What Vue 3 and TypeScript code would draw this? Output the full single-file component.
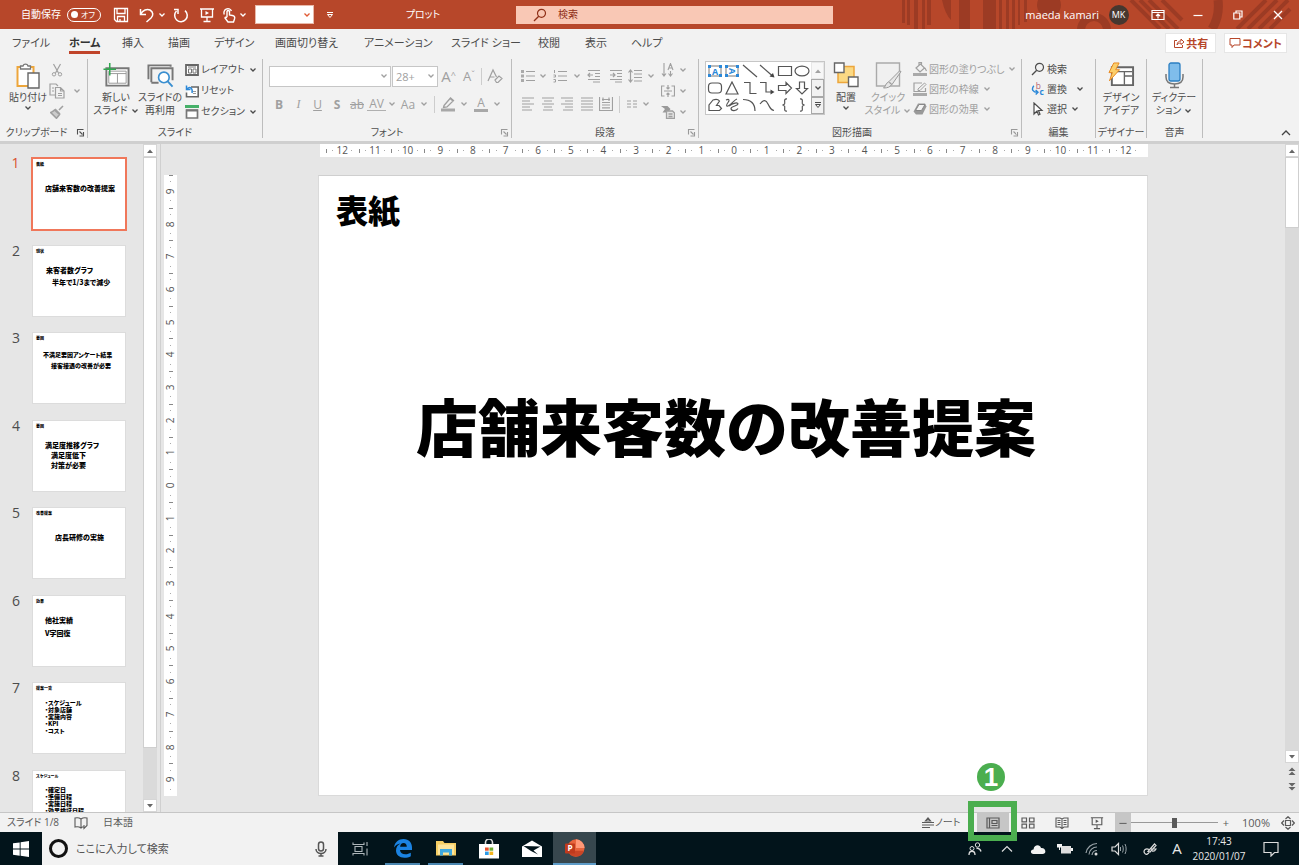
<script setup lang="ts">
interface ThumbLine {
  text: string
  indent?: number
}
interface Thumb {
  title: string
  top: number
  left: number
  size: number
  leading: number
  lines: ThumbLine[]
}

const tabs: string[] = ['ファイル', 'ホーム', '挿入', '描画', 'デザイン', '画面切り替え', 'アニメーション', 'スライド ショー', '校閲', '表示', 'ヘルプ']

const shapes: string[] = [
  'textbox', 'vtextbox', 'line', 'linearrow', 'rect', 'ellipse',
  'round', 'triangle', 'elbow', 'elbowarrow', 'rightarrow', 'downarrow',
  'freeform', 'scribble', 'arc', 'curve', 'lbrace', 'rbrace',
]

const drawRows = [
  { icon: 'fill', label: '図形の塗りつぶし' },
  { icon: 'outline', label: '図形の枠線' },
  { icon: 'effect', label: '図形の効果' },
]

const thumbs: Thumb[] = [
  { title: '表紙', top: 15, left: 9, size: 7, leading: 12, lines: [{ text: '店舗来客数の改善提案' }] },
  { title: '現状', top: 10, left: 10, size: 7, leading: 12, lines: [{ text: '来客者数グラフ' }, { text: '半年で1/3まで減少', indent: 6 }] },
  { title: '要因', top: 8, left: 7, size: 6, leading: 11, lines: [{ text: '不満足要因アンケート結果' }, { text: '接客接遇の改善が必要', indent: 8 }] },
  { title: '要因', top: 11, left: 9, size: 7, leading: 10, lines: [{ text: '満足度推移グラフ' }, { text: '満足度低下', indent: 6 }, { text: '対策が必要', indent: 6 }] },
  { title: '改善提案', top: 15, left: 19, size: 7, leading: 12, lines: [{ text: '店長研修の実施' }] },
  { title: '効果', top: 10, left: 9, size: 7, leading: 13, lines: [{ text: '他社実績' }, { text: 'V字回復' }] },
  { title: '提案一覧', top: 8, left: 9, size: 6, leading: 7, lines: [{ text: '・スケジュール' }, { text: '・対象店舗' }, { text: '・実施内容' }, { text: '・KPI' }, { text: '・コスト' }] },
  { title: 'スケジュール', top: 7, left: 9, size: 6, leading: 7, lines: [{ text: '・確定日' }, { text: '・準備日程' }, { text: '・実施日程' }, { text: '・効果検証日程' }] },
]

const span = (n: number): number[] => Array.from({ length: 2 * n + 1 }, (_, i) => Math.abs(i - n))
const horizontal = span(12)
const vertical = span(9)
</script>

<template>
  <div class="app">
    <svg class="sprite" aria-hidden="true">
      <symbol id="chev" viewBox="0 0 8 8"><path d="M1.500 2.500 4 5l2.500-2.500" fill="none" stroke="currentColor" stroke-width="1.300" /></symbol>
      <symbol id="save" viewBox="0 0 16 16"><path d="M1.500 1.500h13v13h-11l-2-2zM4 1.500v5h8v-5M4.500 14.500v-5h7v5M7 12v2" fill="none" stroke="currentColor" stroke-width="1.300" /></symbol>
      <symbol id="undo" viewBox="0 0 16 16"><path d="M1.500 2v5.500H7M1.500 7.500C4 3 8 1.500 11 3c3.500 2 3.500 5.500 1 8l-4.500 4" fill="none" stroke="currentColor" stroke-width="1.500" /></symbol>
      <symbol id="redo" viewBox="0 0 16 16"><path d="M3.500 4A6.300 6.300 0 1 0 12 3.600M1 2.500h4V7" fill="none" stroke="currentColor" stroke-width="1.500" /></symbol>
      <symbol id="show" viewBox="0 0 16 16"><path d="M1 2h14M2.500 2v8h11V2M8 10v4M4.500 14.500h7" fill="none" stroke="currentColor" stroke-width="1.300" /><path d="M6.500 4v4l3.500-2z" fill="currentColor" /></symbol>
      <symbol id="touch" viewBox="0 0 16 16"><path d="M3.300 7.500A4 4 0 1 1 10.500 4M6 10V4.500a1.300 1.300 0 0 1 2.500 0V8l4 .800c1.500.500 1.500 1.500 1 3.200l-1 3H7L4 11c0-1 1-1.300 2-.200" fill="none" stroke="currentColor" stroke-width="1.400" /></symbol>
      <symbol id="customize" viewBox="0 0 8 8"><path d="M1 1.500h6M1.500 3.500h5L4 6.500z" fill="none" stroke="currentColor" stroke-width="1" /></symbol>
      <symbol id="lens" viewBox="0 0 14 14"><circle cx="8.500" cy="5.300" r="4" fill="none" stroke="currentColor" stroke-width="1.200" /><path d="M5.700 8.200 1 13" stroke="currentColor" stroke-width="1.300" /></symbol>
      <symbol id="ribbonmode" viewBox="0 0 14 12"><path d="M1 1.500h12v9H1zM1 3.500h12M7 9.500V5.500M5 7l2-2 2 2" fill="none" stroke="currentColor" stroke-width="1.200" /></symbol>
      <symbol id="min" viewBox="0 0 10 10"><path d="M.5 5.500h9" stroke="currentColor" stroke-width="1.200" /></symbol>
      <symbol id="restore" viewBox="0 0 10 10"><path d="M.8 3h6v6h-6zM3 3V1h6v6H7" fill="none" stroke="currentColor" stroke-width="1.200" /></symbol>
      <symbol id="close" viewBox="0 0 10 10"><path d="m1 1 8 8M9 1 1 9" stroke="currentColor" stroke-width="1.300" /></symbol>
      <symbol id="share" viewBox="0 0 12 12"><path d="M4 3.500H1.500v7h8V8M4 8c.3-3 2-4 4-4V2l3 3-3 2.500V6C6 6 5 6.500 4 8z" fill="none" stroke="currentColor" stroke-width="1" /></symbol>
      <symbol id="comment" viewBox="0 0 12 12"><path d="M1 1.500h10v6.500H5l-2 2.500V8H1z" fill="none" stroke="currentColor" stroke-width="1" /></symbol>
      <symbol id="launcher" viewBox="0 0 9 9"><path d="M1.500 6.500v-5h6M3.500 3.500l3 3M7.500 4v4h-4" fill="none" stroke="currentColor" stroke-width="1.100" /></symbol>

      <symbol id="paste" viewBox="0 0 26 27"><path d="M2 5h16v19H2z" fill="#fff" stroke="#eda63c" stroke-width="2" /><path d="M5 7V4h2.500a2.600 2.600 0 0 1 5 0H15v3z" fill="#fff" stroke="#777" stroke-width="1.300" /><path d="M12.500 11h11v15h-11z" fill="#fff" stroke="#666" stroke-width="1.400" /></symbol>
      <symbol id="cut" viewBox="0 0 14 14"><path d="m3.500 1 5 9M10.500 1l-5 9" stroke="currentColor" stroke-width="1.200" /><circle cx="4" cy="11.300" r="1.700" fill="none" stroke="currentColor" /><circle cx="10" cy="11.300" r="1.700" fill="none" stroke="currentColor" /></symbol>
      <symbol id="copy" viewBox="0 0 16 16"><path d="M6 12H1V1h6l2 2M6.500 4.500h5L15 8v7H6.500zM11.500 4.500V8H15M9 10.500h4M9 12.500h4M3 5h2M3 8h2" fill="none" stroke="currentColor" stroke-width="1.200" /></symbol>
      <symbol id="painter" viewBox="0 0 14 14"><path d="M13 1 9 5M5 4l5 5M4.500 5C3 6.500 1.500 7 .7 7.500l5.800 5.800c1-1 1.500-2 3-3.800z" fill="#ccc" stroke="currentColor" stroke-width="1.600" /></symbol>
      <symbol id="newslide" viewBox="0 0 28 26"><path d="M3.500 5.500h23v18h-23z" fill="#fff" stroke="#777" stroke-width="2" /><path d="M6 11h18M6 8.500h18V21H6zM15 11v10" fill="none" stroke="#999" /><path d="M7 0v13M.5 6.500h13" stroke="#2fa84f" stroke-width="1.600" /></symbol>
      <symbol id="reuse" viewBox="0 0 28 26"><path d="M1.500 17V2.500h23V4M4.500 20V5.500h22V18M4.500 20.500H12" fill="none" stroke="#777" stroke-width="2" /><circle cx="17.500" cy="15" r="5.500" fill="#fff" stroke="#3a8fd0" stroke-width="1.700" /><path d="m21.500 19 5 5.500" stroke="#3a8fd0" stroke-width="2" /></symbol>
      <symbol id="layout" viewBox="0 0 14 13"><path d="M1 1.500h12v10H1z" fill="#fff" stroke="#666" stroke-width="1.800" /><path d="M3.500 5.500h3v4h-3zM8 5.500h3v4H8zM3 3.500h8" fill="none" stroke="#777" /></symbol>
      <symbol id="reset" viewBox="0 0 14 13"><path d="M6 2.500h7.200v9.700H1.500V8" fill="#fff" stroke="#666" stroke-width="1.600" /><path d="M8 9h3M8 7h3" stroke="#999" /><path d="M1.500 1v4h4M2 4.500c3-3 6-1 5 4" fill="none" stroke="#2b88d8" stroke-width="1.500" /></symbol>
      <symbol id="section" viewBox="0 0 14 14"><path d="M0 0h14v3H0z" fill="#45b068" /><path d="M1.500 5h11v8h-11z" fill="#fff" stroke="#777" stroke-width="1.700" /><path d="M1 4.500h12v2H1z" fill="#777" /></symbol>

      <symbol id="clearfmt" viewBox="0 0 16 16"><path d="m1 13 5-11 3.500 7M3 9h4.500" fill="none" stroke="currentColor" stroke-width="1.200" /><path d="m8 12 4-4 3 2.500-4 4H9.500z" fill="none" stroke="currentColor" stroke-width="1.200" /></symbol>
      <symbol id="marker" viewBox="0 0 16 16"><path d="M4 9.500 10.500 2l3 2.500L7 11l-3.500.500zM10 2.500l3 2.500" fill="none" stroke="currentColor" stroke-width="1.300" /><path d="M1 12.500h14v3H1z" fill="#a8a8a8" /></symbol>

      <symbol id="bullets" viewBox="0 0 14 14"><path d="M0 1h3v3H0zM0 5.500h3v3H0zM0 10h3v3H0z" fill="#aaa" /><path d="M5 2.500h9M5 7h9M5 11.500h9" stroke="currentColor" stroke-width="1.200" /></symbol>
      <symbol id="numbers" viewBox="0 0 14 14"><path d="M1.500 1v3M.5 6h2v2h-2M.5 10.500h2V13h-2" fill="none" stroke="currentColor" /><path d="M5 2.500h9M5 7h9M5 11.500h9" stroke="currentColor" stroke-width="1.200" /></symbol>
      <symbol id="outdent" viewBox="0 0 14 14"><path d="M1 1.500h12M8 4.500h5M8 7.500h5M1 10.500h12M6 13h7M1 6h5M3 4 1 6l2 2" fill="none" stroke="currentColor" stroke-width="1.200" /></symbol>
      <symbol id="indent" viewBox="0 0 14 14"><path d="M1 1.500h12M8 4.500h5M8 7.500h5M1 10.500h12M6 13h7M1 6h5M4 4l2 2-2 2" fill="none" stroke="currentColor" stroke-width="1.200" /></symbol>
      <symbol id="spacing" viewBox="0 0 14 14"><path d="M6 1.500h8M6 5h8M6 8.500h8M6 12h8M2.500 1v12M.5 3.500l2-2.500 2 2.500M.5 10.500l2 2.500 2-2.500" fill="none" stroke="currentColor" stroke-width="1.200" /></symbol>
      <symbol id="left" viewBox="0 0 14 14"><path d="M1 1h12M1 4h8M1 7h12M1 10h8M1 13h10" stroke="currentColor" stroke-width="1.200" /></symbol>
      <symbol id="center" viewBox="0 0 14 14"><path d="M1 1h12M3 4h8M1 7h12M3 10h8M2 13h10" stroke="currentColor" stroke-width="1.200" /></symbol>
      <symbol id="right" viewBox="0 0 14 14"><path d="M1 1h12M5 4h8M1 7h12M5 10h8M3 13h10" stroke="currentColor" stroke-width="1.200" /></symbol>
      <symbol id="justify" viewBox="0 0 14 14"><path d="M1 1h12M1 4h12M1 7h12M1 10h12M1 13h12" stroke="currentColor" stroke-width="1.200" /></symbol>
      <symbol id="distribute" viewBox="0 0 14 14"><path d="M.5 0v13.500h13V0M4 .5V4M10 .5V4M3 2.500h8M3 5.500h8M3 8h8M3 10.800h8" fill="none" stroke="currentColor" stroke-width="1.200" /></symbol>
      <symbol id="columns" viewBox="0 0 12 12"><path d="M1 3h4M7 3h4M1 6h4M7 6h4M1 9h4M7 9h4" stroke="currentColor" stroke-width="1.100" /></symbol>
      <symbol id="textdir" viewBox="0 0 14 14"><path d="M3 0v13M1 10.500 3 13l2-2.500M9.500 8v5M7.500 10.500l2 2.500 2-2.500M7 7l2.500-6.500L12 7M8 5h3" fill="none" stroke="currentColor" stroke-width="1.100" /></symbol>
      <symbol id="valign" viewBox="0 0 14 14"><path d="M3.500 2H.5v10h3M10.500 2h3v10h-3M3 7h8M7 1v4M5.500 3.500 7 5l1.500-1.500M7 13V9M5.500 10.500 7 9l1.500 1.500" fill="none" stroke="currentColor" stroke-width="1.200" /></symbol>
      <symbol id="smartart" viewBox="0 0 14 14"><path d="M0 1h6.500l3 3-2.500 3.500H1.500L4 4z" fill="#999" /><path d="M5.500 6h6l2 2v5.500h-8zM7.500 9h4M7.500 11.500h4" fill="#e6e6e6" stroke="currentColor" stroke-width="1.300" /></symbol>

      <symbol id="s-textbox" viewBox="0 0 16 14"><path d="M2 2h12v10H2z" fill="none" stroke="#777" /><path d="M1 1h3v3H1zM12 1h3v3h-3zM1 10h3v3H1zM12 10h3v3h-3z" fill="#2b88d8" /><text x="8" y="10.500" font-size="9" font-weight="700" text-anchor="middle" fill="#2b88d8">A</text></symbol>
      <symbol id="s-vtextbox" viewBox="0 0 16 14"><path d="M2 2h12v10H2z" fill="none" stroke="#777" /><path d="M1 1h3v3H1zM12 1h3v3h-3zM1 10h3v3H1zM12 10h3v3h-3z" fill="#2b88d8" /><text x="8" y="10.500" font-size="9" font-weight="700" text-anchor="middle" fill="#2b88d8" transform="rotate(90 8 7)">A</text></symbol>
      <symbol id="s-line" viewBox="0 0 16 14"><path d="m1 1 14 12" stroke="#555" stroke-width="1.200" /></symbol>
      <symbol id="s-linearrow" viewBox="0 0 16 14"><path d="m1 1 12 10.500" stroke="#555" stroke-width="1.200" /><path d="m15.500 13.500-5-1 3.500-3.500z" fill="#444" /></symbol>
      <symbol id="s-rect" viewBox="0 0 16 14"><path d="M1.500 2.500h13v9h-13z" fill="none" stroke="#555" stroke-width="1.200" /></symbol>
      <symbol id="s-ellipse" viewBox="0 0 16 14"><ellipse cx="8" cy="7" rx="7" ry="4.800" fill="none" stroke="#555" stroke-width="1.200" /></symbol>
      <symbol id="s-round" viewBox="0 0 16 14"><rect x="1.500" y="2" width="13" height="10" rx="3.500" fill="none" stroke="#555" stroke-width="1.200" /></symbol>
      <symbol id="s-triangle" viewBox="0 0 16 14"><path d="m8 1 6 12H2z" fill="none" stroke="#555" stroke-width="1.200" /></symbol>
      <symbol id="s-elbow" viewBox="0 0 16 14"><path d="M2 1.500h6v11h6.500" fill="none" stroke="#555" stroke-width="1.200" /></symbol>
      <symbol id="s-elbowarrow" viewBox="0 0 16 14"><path d="M1 1.500h6V11h6" fill="none" stroke="#555" stroke-width="1.200" /><path d="M11.500 8.500v5l4-2.500z" fill="#444" /></symbol>
      <symbol id="s-rightarrow" viewBox="0 0 16 14"><path d="M1.500 4.500H9v-3L14.500 7 9 12.500v-3H1.500z" fill="none" stroke="#555" stroke-width="1.200" /></symbol>
      <symbol id="s-downarrow" viewBox="0 0 16 14"><path d="M5.500 1h5v6.500h3L8 13 2.500 7.500h3z" fill="none" stroke="#555" stroke-width="1.200" /></symbol>
      <symbol id="s-freeform" viewBox="0 0 16 14"><path d="M6 2 2 7v5.500h10.500l2-2-2.500-3H9.500L12.500 3C11 1 8.500 1 6 2z" fill="none" stroke="#555" stroke-width="1.200" /></symbol>
      <symbol id="s-scribble" viewBox="0 0 16 14"><path d="M2 2c3-1.500 4 0 2 2.500s-2 5 1 3 6-6 8-6.500M5 8c4-3 9-4 9-2s-7 2-7 4.500 5 3 7 0" fill="none" stroke="#555" stroke-width="1.200" /></symbol>
      <symbol id="s-arc" viewBox="0 0 16 14"><path d="M1 1.500C8 1.500 13 5 13 13" fill="none" stroke="#555" stroke-width="1.200" /></symbol>
      <symbol id="s-curve" viewBox="0 0 16 14"><path d="M1 6c4-5 6-4 8 0s3 6 6 6.500" fill="none" stroke="#555" stroke-width="1.200" /></symbol>
      <symbol id="s-lbrace" viewBox="0 0 16 14"><path d="M10 .8C6 .5 8.500 5 7.500 6L6 7l1.500 1C8.500 9 6 13.500 10 13.200" fill="none" stroke="#555" stroke-width="1.200" /></symbol>
      <symbol id="s-rbrace" viewBox="0 0 16 14"><path d="M6 .8c4-.3 1.500 4.200 2.500 5.200L10 7 8.500 8C7.500 9 10 13.500 6 13.200" fill="none" stroke="#555" stroke-width="1.200" /></symbol>

      <symbol id="arrange" viewBox="0 0 26 27"><path d="M4.500 4.500h16v16h-16z" fill="#fbd983" stroke="#eda63c" stroke-width="1.500" /><path d="M1 1h9.500v9.500H1zM15 15h9.500v9.500H15z" fill="#fff" stroke="#666" stroke-width="1.400" /></symbol>
      <symbol id="quick" viewBox="0 0 26 27"><path d="M1 1h23v23H1z" fill="#f0f0f0" stroke="#aaa" stroke-width="1.400" /><path d="M8 26c2-1 2-5 5-6l3 2.500C15 25 12 26 8 26zM13.500 19.500 24 9l1.500.5-9 13z" fill="#e6e6e6" stroke="#999" /></symbol>
      <symbol id="fill" viewBox="0 0 14 14"><path d="m3 6 4.500-4 4 4-4.500 4zM6 3V.5h2.500V3M12 6l1.500 3" fill="none" stroke="currentColor" stroke-width="1.200" /><path d="M0 11h14v3H0z" fill="#aaa" /></symbol>
      <symbol id="outline" viewBox="0 0 14 14"><path d="M12.500 6v3.500H1V1h8" fill="none" stroke="currentColor" stroke-width="1.200" /><path d="m5 7 6.500-6L13 2.500 7 8.500H5z" fill="none" stroke="currentColor" /><path d="M0 11h14v3H0z" fill="#aaa" /></symbol>
      <symbol id="effect" viewBox="0 0 14 14"><path d="M5 1.500h7l1.500 3-4 8H3L.5 9.500z" fill="#999" /><path d="M6 2.500h6l-3.500 6H2.500z" fill="#f3f3f3" stroke="#888" /></symbol>
      <symbol id="replace" viewBox="0 0 15 15"><path d="M3 4c-3 4-1 7 4 7M5 8.500 7.500 11 5 13.500" fill="none" stroke="#2b88d8" stroke-width="1.500" /><text x="5" y="7" font-size="9" fill="#b5606a">b</text><text x="9" y="14" font-size="9" font-weight="700" fill="#2b88d8">c</text></symbol>
      <symbol id="select" viewBox="0 0 14 14"><path d="M3 1v11l3-3 1.500 4 1.500-.7L7.500 8.500H11z" fill="#fff" stroke="currentColor" stroke-width="1.200" /></symbol>
      <symbol id="design" viewBox="0 0 28 27"><path d="M4 5h22v18.500H4z" fill="#fff" stroke="#666" stroke-width="2" /><path d="M5 9.500h20M17 9.500V23M17 14h8" fill="none" stroke="#666" stroke-width="1.400" /><path d="M6 .5h5.500L8 7.500h4L1.500 19l3-8.500H1z" fill="#fbcf6b" stroke="#e8871e" /></symbol>
      <symbol id="mic" viewBox="0 0 20 27"><path d="M1.500 12v3c0 5 3.500 7 8.500 7s8.500-2 8.500-7v-3M10 22v3M5.500 25.500h9" fill="none" stroke="#777" stroke-width="1.500" /><rect x="4.500" y="1" width="11" height="18" rx="2" fill="#7fbdeb" stroke="#2b7fc2" stroke-width="1.300" /></symbol>
      <symbol id="collapse" viewBox="0 0 10 8"><path d="m1 6 4-4 4 4" fill="none" stroke="#444" stroke-width="1.300" /></symbol>

      <symbol id="up" viewBox="0 0 8 8"><path d="M1 6 4 2.500 7 6z" fill="#666" /></symbol>
      <symbol id="down" viewBox="0 0 8 8"><path d="m1 2 3 3.500L7 2z" fill="#666" /></symbol>
      <symbol id="prev" viewBox="0 0 8 8"><path d="M.5 4 4 .5 7.500 4zM.5 8 4 4.500 7.500 8z" fill="#666" /></symbol>
      <symbol id="next" viewBox="0 0 8 8"><path d="M.5 0 4 3.500 7.500 0zM.5 4 4 7.500 7.500 4z" fill="#666" /></symbol>

      <symbol id="book" viewBox="0 0 14 13"><path d="M7 2.500C5 1 3 1 1 1.500v9c2-.5 4-.5 6 1 1-1 2-1.200 3-1.200M7 2.500v9M7 2.500C9 1 11 1 13 1.500V9l-3 3V8.500" fill="none" stroke="currentColor" stroke-width="1.100" /></symbol>
      <symbol id="notes" viewBox="0 0 14 12"><path d="M1 5.500h12M1 8h12M1 10.500h8M4.500 4 7 1l2.500 3z" fill="none" stroke="currentColor" stroke-width="1.200" /></symbol>
      <symbol id="normal" viewBox="0 0 14 12"><path d="M1 1h12v10H1zM3.500 1v10M6 3.500h5v3H6zM5.500 8.500h6" fill="none" stroke="currentColor" stroke-width="1.200" /></symbol>
      <symbol id="sorter" viewBox="0 0 14 12"><path d="M1 1h4.500v3.800H1zM8.500 1H13v3.800H8.500zM1 7.200h4.500V11H1zM8.500 7.200H13V11H8.500z" fill="none" stroke="currentColor" stroke-width="1.200" /></symbol>
      <symbol id="reader" viewBox="0 0 14 12"><path d="M1 1h4l2 1 2-1h4v9H9l-2 1.500L5 10H1zM7 2v9M2.500 3.500h3M2.500 5.500h3M2.500 7.500h3M8.500 3.500h3M8.500 5.500h3M8.500 7.500h3" fill="none" stroke="currentColor" stroke-width="1.100" /></symbol>
      <symbol id="fit" viewBox="0 0 14 14"><path d="M4.500 4.500h5v5h-5zM4.500 3 7 .7 9.500 3M4.500 11 7 13.300 9.500 11M3 4.500.7 7 3 9.500M11 4.500 13.300 7 11 9.500" fill="none" stroke="currentColor" stroke-width="1.200" /></symbol>

      <symbol id="windows" viewBox="0 0 16 16"><path d="m0 2.300 6.700-.9v6.200H0zM7.600 1.300 16 0v7.600H7.600zM0 8.500h6.700v6.200L0 13.800zM7.600 8.500H16V16l-8.400-1.200z" fill="#fff" /></symbol>
      <symbol id="microphone" viewBox="0 0 12 16"><rect x="3.500" y="1" width="5" height="9" rx="2.500" fill="none" stroke="#555" stroke-width="1.500" /><path d="M1 8c0 6 10 6 10 0M6 12v3M3.500 15h5" fill="none" stroke="#555" stroke-width="1.500" /></symbol>
      <symbol id="taskview" viewBox="0 0 16 14"><path d="M3 4.500h7v5H3zM1 .5v2h11v-2M1 13.500v-2h11v2M15 0v4M15 6.500v7" fill="none" stroke="#aeb6ba" stroke-width="1.100" /></symbol>
      <symbol id="edge" viewBox="0 0 20 20"><path d="M1 9.500C1.800 4 5.500 1 10.500 1c5.500 0 8.500 4 8.500 8.500V12H7c.3 3 2.500 4.200 5.300 4.200 2.200 0 4-.6 5.500-1.500v3.500c-1.800 1-4 1.500-6.500 1.500C6.500 19.700 3 17 3 12.500c0-3.200 1.700-5.700 4.500-7C4.800 5.800 2.500 7.500 1 9.500zM7.100 8.800h6.700c0-2.300-1.200-3.700-3.200-3.700-2.100 0-3.300 1.600-3.500 3.700z" fill="#1b83e2" /></symbol>
      <symbol id="explorer" viewBox="0 0 20 17"><path d="M0 1.500h7l1.500 2H20V16H0z" fill="#f5ce64" /><path d="M2 5h16v10H2z" fill="#fde59c" /><path d="M4 16V9.500h12V16h-3v-3H7v3z" fill="#3fa9e0" /></symbol>
      <symbol id="store" viewBox="0 0 20 20"><path d="M6.500 6V3.500a3.500 3.500 0 0 1 7 0V6" fill="none" stroke="#ddd" stroke-width="1.600" /><path d="M0 5h20v14.500H0z" fill="#fff" /><path d="M6 8.500h3.700v3.200H6z" fill="#e8502c" /><path d="M10.500 8.500h3.700v3.200h-3.700z" fill="#6aab2f" /><path d="M6 12.600h3.700v3.400H6z" fill="#2c9be8" /><path d="M10.500 12.600h3.700v3.400h-3.700z" fill="#f5b51d" /></symbol>
      <symbol id="mail" viewBox="0 0 20 17"><path d="M0 6 10 0l10 6v10.500H0z" fill="#fff" /><path d="m1.500 5.500 17 .500-7 4 4.500 4-7-3.500z" fill="#02141b" /></symbol>
      <symbol id="ppt" viewBox="0 0 22 20"><circle cx="12" cy="10" r="9.500" fill="#e8643c" /><path d="M12 .5a9.500 9.500 0 0 1 9.500 9.500H12z" fill="#ff9877" /><path d="M3 13h18a9.500 9.500 0 0 1-18 0z" fill="#c94526" /><rect x="0" y="5" width="11" height="11" rx="1" fill="#bf3a1d" /><text x="5.500" y="13.500" font-size="9" font-weight="700" text-anchor="middle" fill="#fff">P</text></symbol>
      <symbol id="people" viewBox="0 0 14 14"><circle cx="9.500" cy="3" r="2.200" fill="none" stroke="#ddd" /><circle cx="4" cy="6.500" r="2" fill="none" stroke="#ddd" /><path d="M1 13c0-5 6-5 6 0M8.500 6.500c3-.5 4 1 4.500 3" fill="none" stroke="#ddd" stroke-width="1.300" /></symbol>
      <symbol id="caret" viewBox="0 0 12 8"><path d="m1 6.500 5-5 5 5" fill="none" stroke="#ddd" stroke-width="1.200" /></symbol>
      <symbol id="cloud" viewBox="0 0 16 12"><path d="M3.500 11C0 11 0 6.500 3.500 6.500 4 1.500 10 1 11 5c5-.5 6 6 1.500 6z" fill="#f2f2f2" /></symbol>
      <symbol id="battery" viewBox="0 0 16 12"><path d="M4 3h10v7.500H4z" fill="#ddd" /><path d="M14 5h2v3h-2zM0 1h5v3.500H3V7H2V4.500H0z" fill="#f2f2f2" /></symbol>
      <symbol id="wifi" viewBox="0 0 14 14"><path d="M1 11A11 11 0 0 1 12 1.500M4 12.500a8 8 0 0 1 8-7.500M7 13a5 5 0 0 1 5-4.500" fill="none" stroke="#99a3a8" stroke-width="1.200" /><circle cx="11" cy="12" r="1.500" fill="#ddd" /></symbol>
      <symbol id="sound" viewBox="0 0 16 14"><path d="M1 5h3l3.500-3.500v11L4 9H1z" fill="none" stroke="#ddd" stroke-width="1.200" /><path d="M9.500 5v4M11.500 3.500c1 2 1 5 0 7M14 2c1.500 3 1.500 7 0 10" fill="none" stroke="#99a3a8" /></symbol>
      <symbol id="pen" viewBox="0 0 14 14"><path d="M5 9.500 11.500 2 13 3.500 7 10zM6 7.500c-3-2-6 1-4.500 3.500S6 12 6 9.500M8 7h5c-1 2-2.500 2.500-4 2" fill="none" stroke="#ddd" stroke-width="1.200" /></symbol>
      <symbol id="notify" viewBox="0 0 16 16"><path d="M1 1.500h14v10h-3.500L8 15v-3.500H1z" fill="none" stroke="#ddd" stroke-width="1.200" /></symbol>
    </svg>

    <header class="titlebar">
      <svg class="pattern" viewBox="0 0 400 29" preserveAspectRatio="xMaxYMin slice" aria-hidden="true">
        <g fill="#9c3b24">
          <path d="M3 0h3v23H3zM8 0h3v25H8zM15 0h4v29h-4zM23 0h3v29h-3zM28 0h4v25h-4zM43 0h9v20q-6-6-9-20zM60 0h11v29H60zM84 0h13v29H84zM100 0h3v29h-3zM107 0h3v29h-3zM113 0h3v29h-3zM119 0h2v25h-2zM125 0h3v22h-3z" />
          <circle cx="150" cy="5" r="12" />
        </g>
        <g fill="none" stroke="#9c3b24">
          <circle cx="195" cy="30" r="13" stroke-width="8" />
          <path d="m232 0 29 29m-20-29 29 29m-20-29 29 29m-16-29 20 20" stroke-width="4" />
          <path d="M319 0q2 16-6 29" stroke-width="9" />
          <path d="m338 29 29-29m-18 29 29-29m-18 29 29-29m-18 29 20-20" stroke-width="4" />
        </g>
      </svg>
      <div class="quick">
        <span>自動保存</span>
        <label class="pill"><input type="checkbox" aria-label="自動保存" /><span>オフ</span></label>
        <button aria-label="上書き保存"><svg class="s16"><use href="#save" /></svg></button>
        <button aria-label="元に戻す"><svg class="s16"><use href="#undo" /></svg></button>
        <button aria-label="元に戻す履歴"><svg class="s8"><use href="#chev" /></svg></button>
        <button aria-label="繰り返し"><svg class="s16"><use href="#redo" /></svg></button>
        <button aria-label="最初から"><svg class="s16"><use href="#show" /></svg></button>
        <button aria-label="タッチ"><svg class="s16"><use href="#touch" /></svg></button>
        <button aria-label="タッチの設定"><svg class="s8"><use href="#chev" /></svg></button>
        <span class="combo style"><select aria-label="スタイル"><option></option></select><svg class="s8"><use href="#chev" /></svg></span>
        <button aria-label="カスタマイズ"><svg class="s8"><use href="#customize" /></svg></button>
      </div>
      <div class="doc">プロット</div>
      <label class="search"><svg class="s14"><use href="#lens" /></svg><input type="search" placeholder="検索" aria-label="検索" /></label>
      <div class="window">
        <span class="user">maeda kamari</span>
        <button aria-label="アカウント"><span class="avatar">MK</span></button>
        <button aria-label="リボンの表示"><svg class="s14"><use href="#ribbonmode" /></svg></button>
        <button aria-label="最小化"><svg class="s10"><use href="#min" /></svg></button>
        <button aria-label="元のサイズ"><svg class="s10"><use href="#restore" /></svg></button>
        <button aria-label="閉じる"><svg class="s10"><use href="#close" /></svg></button>
      </div>
    </header>

    <nav class="tabs">
      <div class="tablist">
        <button v-for="tab in tabs" :key="tab" :class="{ active: tab === 'ホーム' }"><span>{{ tab }}</span></button>
      </div>
      <div class="tabactions">
        <button><svg class="s12"><use href="#share" /></svg>共有</button>
        <button><svg class="s12"><use href="#comment" /></svg>コメント</button>
      </div>
    </nav>

    <div class="ribbon">
      <section class="group clipboard">
        <div class="body">
          <button class="big"><svg class="s26"><use href="#paste" /></svg><span>貼り付け</span><svg class="s8"><use href="#chev" /></svg></button>
          <div class="stack dim">
            <button aria-label="切り取り"><svg class="s14"><use href="#cut" /></svg></button><i></i>
            <button aria-label="コピー"><svg class="s16"><use href="#copy" /></svg></button><button aria-label="コピーの種類"><svg class="s8"><use href="#chev" /></svg></button>
            <button aria-label="書式のコピー"><svg class="s14"><use href="#painter" /></svg></button><i></i>
          </div>
        </div>
        <h2>クリップボード<button class="launch" aria-label="クリップボードの詳細"><svg class="s9"><use href="#launcher" /></svg></button></h2>
      </section>

      <section class="group slides">
        <div class="body">
          <button class="big"><svg class="s26"><use href="#newslide" /></svg><span>新しい</span><span>スライド <svg class="s8"><use href="#chev" /></svg></span></button>
          <button class="big"><svg class="s26"><use href="#reuse" /></svg><span>スライドの</span><span>再利用</span></button>
          <div class="rows">
            <button><svg class="s14"><use href="#layout" /></svg>レイアウト<svg class="s8 after"><use href="#chev" /></svg></button>
            <button><svg class="s14"><use href="#reset" /></svg>リセット</button>
            <button><svg class="s14"><use href="#section" /></svg>セクション<svg class="s8 after"><use href="#chev" /></svg></button>
          </div>
        </div>
        <h2>スライド</h2>
      </section>

      <section class="group font dim">
        <div class="body lines">
          <div class="line f1">
            <span class="combo"><select aria-label="フォント"><option></option></select><svg class="s8"><use href="#chev" /></svg></span>
            <span class="combo"><select aria-label="フォント サイズ"><option>28+</option></select><svg class="s8"><use href="#chev" /></svg></span>
            <button class="grow" aria-label="拡大">A<sup>^</sup></button>
            <button class="shrink" aria-label="縮小">A<sup>ˇ</sup></button>
            <i class="bar"></i>
            <button aria-label="書式のクリア"><svg class="s16"><use href="#clearfmt" /></svg></button>
          </div>
          <div class="line f2">
            <button><b>B</b></button>
            <button><em>I</em></button>
            <button><u>U</u></button>
            <button><b>S</b></button>
            <button><s>ab</s></button>
            <button class="kern">AV</button>
            <button aria-label="文字の間隔"><svg class="s8"><use href="#chev" /></svg></button>
            <button>Aa</button>
            <button aria-label="文字種"><svg class="s8"><use href="#chev" /></svg></button>
            <i class="bar"></i>
            <button aria-label="蛍光ペン"><svg class="s16"><use href="#marker" /></svg></button>
            <button aria-label="蛍光ペンの色"><svg class="s8"><use href="#chev" /></svg></button>
            <button class="ink">A</button>
            <button aria-label="フォントの色"><svg class="s8"><use href="#chev" /></svg></button>
          </div>
        </div>
        <h2>フォント<button class="launch" aria-label="フォントの詳細"><svg class="s9"><use href="#launcher" /></svg></button></h2>
      </section>

      <section class="group para dim">
        <div class="body">
          <div class="lines">
            <div class="line p1">
              <button aria-label="箇条書き"><svg class="s14"><use href="#bullets" /></svg></button>
              <button aria-label="行頭文字"><svg class="s8"><use href="#chev" /></svg></button>
              <button aria-label="段落番号"><svg class="s14"><use href="#numbers" /></svg></button>
              <button aria-label="番号の種類"><svg class="s8"><use href="#chev" /></svg></button>
              <button aria-label="レベルを下げる"><svg class="s14"><use href="#outdent" /></svg></button>
              <button aria-label="レベルを上げる"><svg class="s14"><use href="#indent" /></svg></button>
              <button aria-label="行間"><svg class="s14"><use href="#spacing" /></svg></button>
              <button aria-label="行間の値"><svg class="s8"><use href="#chev" /></svg></button>
            </div>
            <div class="line p2">
              <button aria-label="左揃え"><svg class="s14"><use href="#left" /></svg></button>
              <button aria-label="中央揃え"><svg class="s14"><use href="#center" /></svg></button>
              <button aria-label="右揃え"><svg class="s14"><use href="#right" /></svg></button>
              <button aria-label="両端揃え"><svg class="s14"><use href="#justify" /></svg></button>
              <button aria-label="均等割り付け"><svg class="s14"><use href="#distribute" /></svg></button>
              <i class="bar"></i>
              <button aria-label="段組み"><svg class="s12"><use href="#columns" /></svg></button>
              <button aria-label="段数"><svg class="s8"><use href="#chev" /></svg></button>
            </div>
          </div>
          <div class="stack">
            <template v-for="icon in ['textdir', 'valign', 'smartart']" :key="icon">
              <button :aria-label="icon"><svg class="s14"><use :href="'#' + icon" /></svg></button>
              <button :aria-label="icon + ' メニュー'"><svg class="s8"><use href="#chev" /></svg></button>
            </template>
          </div>
        </div>
        <h2>段落<button class="launch" aria-label="段落の詳細"><svg class="s9"><use href="#launcher" /></svg></button></h2>
      </section>

      <section class="group drawing">
        <div class="body">
          <div class="gallery">
            <div class="shapes">
              <button v-for="shape in shapes" :key="shape" :aria-label="shape"><svg class="shape"><use :href="'#s-' + shape" /></svg></button>
            </div>
            <div class="steps">
              <button class="off" aria-label="前の行"><svg class="s8"><use href="#up" /></svg></button>
              <button aria-label="次の行"><svg class="s8"><use href="#chev" /></svg></button>
              <button aria-label="すべて"><svg class="s8"><use href="#customize" /></svg></button>
            </div>
          </div>
          <button class="big arrange"><svg class="s26"><use href="#arrange" /></svg><span>配置</span><svg class="s8"><use href="#chev" /></svg></button>
          <button class="big quickstyle dim"><svg class="s26"><use href="#quick" /></svg><span>クイック</span><span>スタイル <svg class="s8"><use href="#chev" /></svg></span></button>
          <div class="rows tight dim">
            <button v-for="row in drawRows" :key="row.icon"><svg class="s14"><use :href="'#' + row.icon" /></svg>{{ row.label }}<svg class="s8 after"><use href="#chev" /></svg></button>
          </div>
        </div>
        <h2>図形描画<button class="launch" aria-label="図形の詳細"><svg class="s9"><use href="#launcher" /></svg></button></h2>
      </section>

      <section class="group edit">
        <div class="body">
          <div class="rows tight">
            <button><svg class="s14"><use href="#lens" /></svg>検索</button>
            <button class="wide"><svg class="s14"><use href="#replace" /></svg>置換<svg class="s8 after"><use href="#chev" /></svg></button>
            <button><svg class="s14"><use href="#select" /></svg>選択<svg class="s8 after"><use href="#chev" /></svg></button>
          </div>
        </div>
        <h2>編集</h2>
      </section>

      <section class="group designer">
        <div class="body"><button class="big"><svg class="s26"><use href="#design" /></svg><span>デザイン</span><span>アイデア</span></button></div>
        <h2>デザイナー</h2>
      </section>

      <section class="group voice">
        <div class="body"><button class="big"><svg class="s26"><use href="#mic" /></svg><span>ディクテー</span><span>ション <svg class="s8"><use href="#chev" /></svg></span></button></div>
        <h2>音声</h2>
      </section>

      <button class="collapse" aria-label="リボンを折りたたむ"><svg class="s10"><use href="#collapse" /></svg></button>
    </div>

    <main class="work">
      <aside class="pane">
        <ol class="thumbs">
          <li v-for="(thumb, i) in thumbs" :key="i" :class="{ current: i === 0 }">
            <span class="num">{{ i + 1 }}</span>
            <div class="thumb">
              <h3>{{ thumb.title }}</h3>
              <div class="content" :style="{ marginTop: thumb.top + 'px', marginLeft: thumb.left + 'px', fontSize: thumb.size + 'px', lineHeight: thumb.leading + 'px' }">
                <p v-for="line in thumb.lines" :key="line.text" :style="{ marginLeft: (line.indent ?? 0) + 'px' }">{{ line.text }}</p>
              </div>
            </div>
          </li>
        </ol>
      </aside>
      <div class="scroll left">
        <button aria-label="上へ"><svg class="s8"><use href="#up" /></svg></button>
        <div class="track"><div class="grip"></div></div>
        <button aria-label="下へ"><svg class="s8"><use href="#down" /></svg></button>
      </div>
      <div class="stage">
        <div class="ruler h"><span v-for="(n, i) in horizontal" :key="i">{{ n }}</span></div>
        <div class="ruler v"><span v-for="(n, i) in vertical" :key="i"><b>{{ n }}</b></span></div>
        <article class="slide">
          <h1>表紙</h1>
          <p>店舗来客数の改善提案</p>
        </article>
      </div>
      <div class="scroll right">
        <button aria-label="上へ"><svg class="s8"><use href="#up" /></svg></button>
        <div class="track"><div class="grip"></div></div>
        <button aria-label="下へ"><svg class="s8"><use href="#down" /></svg></button>
        <button class="page" aria-label="前のスライド"><svg class="s8"><use href="#prev" /></svg></button>
        <button class="page" aria-label="次のスライド"><svg class="s8"><use href="#next" /></svg></button>
      </div>
    </main>

    <footer class="status">
      <div class="info">
        <span>スライド 1/8</span>
        <button aria-label="スペル チェック"><svg class="s14"><use href="#book" /></svg></button>
        <span>日本語</span>
      </div>
      <div class="views">
        <button class="notes"><svg class="s14"><use href="#notes" /></svg>ノート</button>
        <div class="normalview">
          <button aria-label="標準"><svg class="s14"><use href="#normal" /></svg></button>
          <span class="badge">1</span>
          <span class="frame"></span>
        </div>
        <button aria-label="スライド一覧"><svg class="s14"><use href="#sorter" /></svg></button>
        <button aria-label="閲覧表示"><svg class="s14"><use href="#reader" /></svg></button>
        <button aria-label="スライド ショー"><svg class="s14"><use href="#show" /></svg></button>
        <button class="minus" aria-label="縮小"><svg class="s8"><use href="#min" /></svg></button>
        <input type="range" min="0" max="100" value="50" aria-label="ズーム" />
        <button>+</button>
        <button>100%</button>
        <button aria-label="ウィンドウに合わせる"><svg class="s14"><use href="#fit" /></svg></button>
      </div>
    </footer>

    <div class="taskbar">
      <button class="start" aria-label="スタート"><svg class="s16"><use href="#windows" /></svg></button>
      <label class="cortana"><span class="ring"></span><input type="text" placeholder="ここに入力して検索" aria-label="ここに入力して検索" /><svg class="s16"><use href="#microphone" /></svg></label>
      <div class="apps">
        <button aria-label="タスク ビュー"><svg class="s16"><use href="#taskview" /></svg></button>
        <button class="open" aria-label="Edge"><svg class="s20"><use href="#edge" /></svg></button>
        <button class="open" aria-label="エクスプローラー"><svg class="s20"><use href="#explorer" /></svg></button>
        <button aria-label="ストア"><svg class="s20"><use href="#store" /></svg></button>
        <button aria-label="メール"><svg class="s20"><use href="#mail" /></svg></button>
        <button class="front" aria-label="PowerPoint"><svg class="s20"><use href="#ppt" /></svg></button>
      </div>
      <div class="tray">
        <button aria-label="People"><svg class="s14"><use href="#people" /></svg></button>
        <button aria-label="隠れているアイコン"><svg class="s12"><use href="#caret" /></svg></button>
        <button aria-label="OneDrive"><svg class="s16"><use href="#cloud" /></svg></button>
        <button aria-label="電源"><svg class="s16"><use href="#battery" /></svg></button>
        <button aria-label="ネットワーク"><svg class="s14"><use href="#wifi" /></svg></button>
        <button aria-label="音量"><svg class="s16"><use href="#sound" /></svg></button>
        <button aria-label="ペン"><svg class="s14"><use href="#pen" /></svg></button>
        <button class="ime">A</button>
        <time datetime="2020-01-07T17:43"><span>17:43</span><span>2020/01/07</span></time>
        <button aria-label="通知"><svg class="s16"><use href="#notify" /></svg></button>
      </div>
    </div>
  </div>
</template>

<style>
body {
  margin: 0;
}
</style>

<style scoped>
.app {
  display: flex;
  flex-direction: column;
  height: 100vh;
  overflow: hidden;
  box-sizing: border-box;
  border-right: 1px solid #fff;
  background: #e6e6e6;
  color: #4c4c4c;
  font-family: "Open Sans", "Noto Sans CJK JP", sans-serif;
  font-size: 10px;
  line-height: 13px;
  font-feature-settings: "palt" 1;
}
.app *,
.app *::before,
.app *::after {
  box-sizing: border-box;
}
.sprite {
  position: absolute;
  width: 0;
  height: 0;
}
svg {
  flex: none;
}
.s8 { width: 8px; height: 8px; }
.s9 { width: 9px; height: 9px; }
.s10 { width: 10px; height: 10px; }
.s12 { width: 12px; height: 12px; }
.s14 { width: 14px; height: 14px; }
.s16 { width: 16px; height: 16px; }
.s20 { width: 20px; height: 20px; }
.s26 { width: 27px; height: 27px; }
button,
input,
select {
  margin: 0;
  padding: 0;
  border: 0;
  background: none;
  color: inherit;
  font: inherit;
  font-feature-settings: inherit;
  outline: none;
}
button {
  display: flex;
  align-items: center;
  justify-content: center;
  white-space: nowrap;
}
h1, h2, h3, p, ol {
  margin: 0;
  padding: 0;
}

/* title bar */
.titlebar {
  position: relative;
  flex: none;
  display: grid;
  grid-template-columns: 340px 176px minmax(0, 317px) 1fr;
  align-items: center;
  height: 29px;
  background: #b7472a;
  color: #fff;
}
.pattern {
  position: absolute;
  top: 0;
  right: 0;
  width: 400px;
  height: 29px;
}
.quick {
  display: grid;
  grid-template-columns: 46px 37px 34px 18px 12px 26px 26px 18px 10px 72px 20px;
  align-items: center;
  padding-left: 21px;
}
.pill {
  display: flex;
  align-items: center;
  gap: 3px;
  width: 34px;
  height: 14px;
  padding: 0 3px;
  border: 1px solid #fff;
  border-radius: 7px;
  font-size: 8px;
  line-height: 12px;
  white-space: nowrap;
}
.pill input {
  flex: none;
  appearance: none;
  width: 7px;
  height: 7px;
  border-radius: 50%;
  background: #fff;
}
.combo {
  display: grid;
  align-items: center;
  background: #fff;
  border: 1px solid #c6c6c6;
}
.combo > * {
  grid-area: 1 / 1;
}
.combo svg {
  justify-self: end;
  margin-right: 2px;
  pointer-events: none;
}
.combo select {
  appearance: none;
  width: 100%;
  height: 19px;
  padding-left: 3px;
  border-radius: 0;
  font-size: 11px;
}
.combo.style {
  width: 59px;
  height: 19px;
  margin-left: 7px;
  border-color: #e9b9aa;
  color: #e05a33;
}
.combo.style select {
  height: 17px;
}
.doc {
  padding-right: 10px;
  text-align: center;
}
.search {
  display: flex;
  align-items: center;
  gap: 11px;
  height: 18px;
  padding-left: 17px;
  background: #f9c8b5;
  color: #8f2f17;
}
.search input {
  flex: 1;
  min-width: 0;
}
.search input::placeholder {
  color: #8f2f17;
  opacity: 1;
}
.window {
  position: relative;
  display: grid;
  grid-template-columns: 1fr 39px repeat(4, 40px);
  align-items: center;
  padding-right: 1px;
}
.user {
  text-align: right;
  font-size: 11px;
}
.avatar {
  width: 20px;
  height: 20px;
  border-radius: 50%;
  background: #46372f;
  font-size: 9px;
  line-height: 20px;
}

/* tabs */
.tabs {
  flex: none;
  display: flex;
  justify-content: space-between;
  height: 28px;
  background: #f2f2f2;
}
.tablist {
  display: grid;
  grid-template-columns: 57px 53px 46px 46px 61px 89px 87px 87px 47px 46px 50px;
  padding-left: 12px;
  font-size: 11px;
}
.tablist button {
  justify-content: flex-start;
}
.tablist span {
  padding: 3px 0 1px;
  border-bottom: 3px solid transparent;
  line-height: 14px;
}
.tablist .active span {
  border-color: #c0442a;
  color: #333;
  font-weight: 700;
}
.tabactions {
  display: flex;
  gap: 8px;
  padding: 4px 12px 4px 0;
}
.tabactions button {
  gap: 1px;
  min-width: 51px;
  padding: 0 4px;
  background: #fff;
  border: 1px solid #e6e6e6;
  color: #b7472a;
  font-size: 11px;
  font-weight: 700;
}

/* ribbon */
.ribbon {
  flex: none;
  display: flex;
  padding: 2px 0 3px;
  background: #f2f2f2;
  border-bottom: 3px solid #cfcfcf;
}
.group {
  flex: none;
  display: flex;
  flex-direction: column;
  height: 79px;
  border-right: 1px solid #bdbdbd;
}
.clipboard { width: 88px; }
.slides { width: 175px; }
.font { width: 249px; }
.para { width: 187px; }
.drawing { width: 323px; }
.edit { width: 74px; }
.designer { width: 51px; }
.voice { width: 56px; }
.body {
  flex: 1;
  display: flex;
}
.group h2 {
  position: relative;
  color: #505050;
  font-size: 10px;
  font-weight: 400;
  line-height: 12px;
  text-align: center;
}
.clipboard h2 {
  padding-right: 14px;
}
.launch {
  position: absolute;
  right: 2px;
  bottom: 1px;
}
.dim .launch,
.drawing .launch {
  color: #999;
}
.dim .body,
.dim.big,
.dim.rows,
.dim.stack {
  color: #a0a0a0;
}
.big {
  flex-direction: column;
  justify-content: flex-start;
  align-self: flex-start;
  padding-top: 3px;
}
.big > span {
  display: flex;
  align-items: center;
  gap: 3px;
}
.big > span:first-of-type {
  margin-top: 2px;
}
.clipboard .big {
  width: 46px;
  margin-left: 5px;
}
.stack {
  display: grid;
  grid-template-columns: 20px 10px;
  grid-template-rows: repeat(3, 21px);
}
.clipboard .stack {
  margin-left: -4px;
  grid-template-columns: 20px 20px;
}
.rows {
  display: grid;
  grid-template-rows: repeat(3, 21px);
}
.rows.tight {
  grid-template-rows: repeat(3, 20px);
}
.rows button {
  justify-content: flex-start;
  gap: 2px;
}
.rows .after {
  margin-left: 2px;
}
.rows .wide .after {
  margin-left: 7px;
}
.slides .big {
  width: 44px;
}
.slides .big:first-child {
  margin-left: 6px;
}
.slides .rows {
  margin-left: 3px;
}
.lines {
  display: flex;
  flex-direction: column;
  gap: 6px;
  padding-top: 6px;
}
.line {
  display: grid;
  align-items: center;
  height: 22px;
}
.line .bar {
  justify-self: center;
  width: 1px;
  height: 17px;
  background: #cdcdcd;
}
.f1 {
  grid-template-columns: 123px 46px 21px 20px 5px 22px;
  padding-left: 6px;
}
.f1 .combo {
  height: 21px;
}
.f1 .combo:first-child {
  margin-right: 1px;
}
.f2 {
  grid-template-columns: 20px 19px 19px 20px 20px 19px 11px 22px 10px 10px 18px 14px 20px 12px;
  padding-left: 6px;
  font-size: 12px;
}
.grow { font-size: 15px; }
.shrink { font-size: 13px; }
.line sup {
  align-self: flex-start;
  font-size: 9px;
  line-height: 9px;
}
.f2 em { font-family: "Liberation Serif", serif; }
.kern {
  border-bottom: 1px solid #b0b0b0;
}
.ink {
  justify-self: center;
  width: 14px;
  border-bottom: 3px solid #a8a8a8;
}
.para .lines {
  padding-left: 6px;
}
.para .stack {
  margin-left: 3px;
}
.p1 { grid-template-columns: 20px 10px 24px 9px 26px 17px 22px 9px; }
.p2 { grid-template-columns: 20px 19px 20px 19px 20px 6px 19px 10px; }

.gallery {
  display: flex;
  align-self: flex-start;
  width: 120px;
  height: 54px;
  margin: 2px 0 0 6px;
  background: #fff;
  border: 1px solid #c6c6c6;
}
.shapes {
  flex: 1;
  display: grid;
  grid-template-columns: repeat(6, 1fr);
  grid-template-rows: repeat(3, 1fr);
}
.shape {
  width: 16px;
  height: 14px;
}
.steps {
  display: grid;
  grid-template-rows: repeat(3, 1fr);
  width: 13px;
}
.steps button {
  background: #f2f2f2;
  border: 1px solid #a8a8a8;
}
.steps .off {
  border-color: #d8d8d8;
  opacity: .6;
}
.arrange { width: 42px; }
.quickstyle { width: 42px; }
.drawing .rows { margin-left: 4px; }
.drawing h2 { padding-right: 16px; }
.edit .rows { margin-left: 9px; }
.designer .big { width: 51px; }
.voice .big { width: 54px; }
.collapse {
  align-self: flex-end;
  margin: 0 8px 0 auto;
}

/* working area */
.work {
  flex: 1;
  display: flex;
  min-height: 0;
}
.pane {
  flex: none;
  width: 143px;
  overflow: hidden;
}
.thumbs {
  display: grid;
  grid-template-rows: repeat(8, 1fr);
  height: 700px;
  padding: 0;
  margin-top: 13px;
  list-style: none;
}
.thumbs li {
  display: flex;
  align-items: flex-start;
}
.num {
  width: 32px;
  text-align: center;
  font-size: 14px;
  line-height: 12px;
}
.current .num {
  width: 31px;
  color: #d9502e;
}
.thumb {
  width: 94px;
  height: 72px;
  padding: 3px;
  border: 1px solid #dcdcdc;
  background: #fff;
  color: #000;
  font-family: "Noto Sans CJK JP", sans-serif;
  font-weight: 900;
}
.current .thumb {
  width: 96px;
  height: 74px;
  border: 2px solid #f0775a;
}
.thumb h3 {
  height: 5px;
  font-size: 4px;
  line-height: 5px;
  font-weight: 900;
}
.content p {
  white-space: nowrap;
}
.scroll {
  flex: none;
  display: flex;
  flex-direction: column;
  width: 14px;
}
.scroll button {
  height: 13px;
  background: #fff;
  border: 1px solid #d6d6d6;
}
.track {
  flex: 1;
  display: flex;
  flex-direction: column;
  background: #dadada;
}
.grip {
  background: #fff;
  border: 1px solid #cfcfcf;
}
.scroll.left .grip { flex: 0 0 92%; }
.scroll.right .grip { flex: 0 0 12%; }
.scroll.left {
  width: 14px;
  margin-right: 3px;
}
.scroll.right .page {
  height: 16px;
  background: none;
  border: 0;
}
.scroll.right {
  padding-bottom: 17px;
}
.stage {
  flex: 1;
  display: grid;
  grid-template-columns: 16px 1fr;
  grid-template-rows: 31px 1fr;
  min-width: 0;
  border-left: 1px solid #d0d0d0;
  padding-bottom: 16px;
}
.ruler {
  display: flex;
  background: #fff;
  color: #555;
  font-size: 10px;
}
.ruler span {
  flex: 1;
  display: flex;
  align-items: center;
  justify-content: center;
}
.ruler.h {
  grid-area: 1 / 2;
  height: 13px;
  margin: 0 137px 0 143px;
  padding: 0 6px;
}
.ruler.h span {
  background:
    linear-gradient(#888, #888) 0 50% / 1px 4px no-repeat,
    linear-gradient(#aaa, #aaa) 20% 50% / 1px 1px no-repeat,
    linear-gradient(#aaa, #aaa) 80% 50% / 1px 1px no-repeat;
}
.ruler.v {
  grid-area: 2 / 1;
  flex-direction: column;
  width: 13px;
  margin-left: 3px;
}
.ruler.v span {
  min-height: 0;
  background:
    linear-gradient(#888, #888) 50% 0 / 4px 1px no-repeat,
    linear-gradient(#aaa, #aaa) 50% 20% / 1px 1px no-repeat,
    linear-gradient(#aaa, #aaa) 50% 80% / 1px 1px no-repeat;
}
.ruler.v b {
  font-weight: 400;
  transform: rotate(-90deg);
}
.slide {
  grid-area: 2 / 2;
  display: flex;
  flex-direction: column;
  margin: 0 137px 0 141px;
  padding: 10px 17px 0;
  background: #fff;
  border: 1px solid #dadada;
  border-top-color: #cfcfcf;
  color: #000;
  font-family: "Noto Sans CJK JP", sans-serif;
  font-weight: 900;
  font-feature-settings: normal;
}
.slide h1 {
  font-size: 32px;
  font-weight: 900;
  line-height: 46px;
}
.slide p {
  margin-top: 148px;
  padding-right: 14px;
  text-align: center;
  white-space: nowrap;
  font-size: 62px;
  line-height: 90px;
}

/* status bar */
.status {
  position: relative;
  z-index: 1;
  flex: none;
  display: flex;
  justify-content: space-between;
  height: 20px;
  background: #f2f2f2;
  border-top: 1px solid #c6c6c6;
  color: #5a5a5a;
}
.info {
  display: flex;
  align-items: center;
  gap: 15px;
  padding-left: 7px;
}
.views {
  display: grid;
  grid-template-columns: 56px 32px 37px 32px 37px 16px 87px 16px 44px 20px;
  padding-right: 1px;
}
.notes {
  justify-content: flex-start;
}
.views button {
  font-size: 11px;
}
.views .notes {
  font-size: 10px;
}
.normalview {
  position: relative;
  display: flex;
}
.normalview button {
  flex: 1;
  background: #c6c6c6;
}
.frame {
  position: absolute;
  inset: -12px -8px -9px -9px;
  border: 6px solid #4bae4f;
}
.badge {
  position: absolute;
  left: 0;
  bottom: 41px;
  width: 28px;
  height: 28px;
  border-radius: 50%;
  background: #4bae4f;
  color: #fff;
  font-family: "Liberation Sans", sans-serif;
  font-size: 26px;
  font-weight: 700;
  line-height: 28px;
  text-align: center;
}
.minus {
  background: #c6c6c6;
}
.views input {
  appearance: none;
  width: 100%;
  height: 19px;
  background: linear-gradient(#999, #999) 0 50% / 100% 1px no-repeat;
}
.views input::-webkit-slider-thumb {
  appearance: none;
  width: 5px;
  height: 10px;
  background: #5a5a5a;
}

/* taskbar */
.taskbar {
  flex: none;
  display: flex;
  height: 33px;
  background: #02141b;
  color: #e8e8e8;
}
.start {
  width: 42px;
}
.cortana {
  display: flex;
  align-items: center;
  gap: 8px;
  width: 296px;
  padding: 0 9px 0 7px;
  background: #f2f2f2;
}
.ring {
  width: 19px;
  height: 19px;
  border: 3px solid #111;
  border-radius: 50%;
}
.cortana input {
  flex: 1;
  min-width: 0;
  font-size: 11px;
}
.cortana input::placeholder {
  color: #555;
  opacity: 1;
}
.apps {
  display: grid;
  grid-template-columns: repeat(6, 43px);
}
.open {
  margin: 0 4px;
  border-bottom: 2px solid #4a86b0;
}
.front {
  background: #37474e;
  border-bottom: 2px solid #5e9cc8;
}
.tray {
  display: grid;
  grid-template-columns: 30px 34px 27px 27px 27px 28px 34px 20px 64px 40px;
  margin-left: auto;
  padding-right: 8px;
}
.ime {
  font-size: 15px;
}
.tray time {
  display: flex;
  flex-direction: column;
  justify-content: center;
  text-align: center;
  line-height: 15px;
}
</style>
